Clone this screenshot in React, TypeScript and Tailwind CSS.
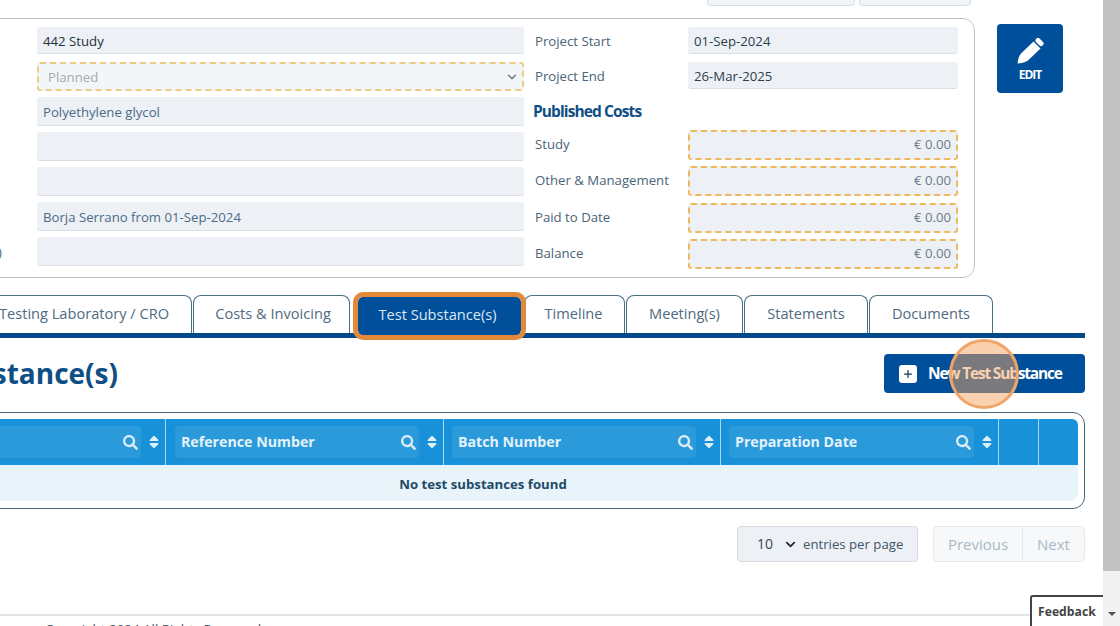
import React from 'react';
import { FaSearch, FaSort, FaChevronDown } from 'react-icons/fa';
import { Plus } from 'lucide-react';

const leftFields = [
  { value: 'Polyethylene glycol', label: '' },
  { value: '', label: '' },
  { value: '', label: '' },
  { value: 'Borja Serrano from 01-Sep-2024', label: '' },
  { value: '', label: ')' },
];

const costLabels = ['Study', 'Other & Management', 'Paid to Date', 'Balance'];

const tabs = [
  { name: 'Costs & Invoicing', w: 'w-[157px] pl-[3px]' },
  { name: 'Test Substance(s)', w: 'w-[163px] pr-[4px]', active: true },
  { name: 'Timeline', w: 'w-[101px] pr-[2px]' },
  { name: 'Meeting(s)', w: 'w-[117px]' },
  { name: 'Statements', w: 'w-[124px]' },
  { name: 'Documents', w: 'w-[124px]' },
];

const columns = [
  { name: 'Reference Number', w: 'w-[278px] pl-[9px]' },
  { name: 'Batch Number', w: 'w-[277px] pl-[8px]' },
  { name: 'Preparation Date', w: 'w-[278px] pl-[8px]' },
];

const PenIcon: React.FC = () => (
  <svg viewBox="0 0 28 28" className="w-[28px] h-[28px]" fill="currentColor">
    <path d="M1.5 26.5C2 22 3 19 5 16.5L17.5 4.5L24.5 11.5L12 23.5C9 25.5 5 26.5 1.5 26.5Z" />
    <path d="M22 3.5L25 6.5" stroke="currentColor" strokeWidth="5" strokeLinecap="round" />
  </svg>
);

const FilterCell: React.FC<{ name: string; w: string }> = ({ name, w }) => (
  <div className={`${w} h-full shrink-0 flex items-center gap-[5px] pr-[3px] border-r border-[#a9d8f2]`}>
    <div className="flex-1 h-[32px] bg-[#2b9ada] rounded-[4px] flex items-center justify-between pl-[6px] pr-[3px]">
      <span className="text-[14.2px] font-bold text-[#e4f2fb]">{name}</span>
      <FaSearch className="text-[15px] text-[#d8ecf8]" />
    </div>
    <FaSort className="text-[16px] text-[#dff0fa]" />
  </div>
);

export default function App() {
  return (
    <div className="w-[1120px] h-[626px] overflow-hidden flex bg-white text-[13.2px] text-[#4a6478] font-['Open_Sans',sans-serif]">
      <div className="relative w-[1103px] h-full flex flex-col shrink-0">
        {/* top buttons, cut off by the scroll position */}
        <div className="h-[6px] shrink-0 flex justify-end gap-[4px] pr-[132px]">
          <div className="w-[148px] h-full bg-[#f1f4f8] border border-t-0 border-[#d5dde3] rounded-b-[4px]" />
          <div className="w-[112px] h-full bg-[#f1f4f8] border border-t-0 border-[#d5dde3] rounded-b-[4px]" />
        </div>

        {/* study panel */}
        <div className="flex mt-[12px] shrink-0">
          <div className="-ml-[20px] w-[995px] h-[260px] shrink-0 border border-[#b9c5cc] rounded-[12px] pt-[8px] flex">
            <div className="w-[56px] shrink-0" />
            <div className="w-[487px] flex flex-col">
              <div className="h-[27px] bg-[#edf1f5] border-b border-[#d8dfe5] rounded-[3px] flex items-center px-[6px] pt-[3px] text-[#22303c]">442 Study</div>
              <div className="relative mt-[8px] h-[29px] bg-[#f3f6f8] border-2 border-dashed border-[#eecb85] rounded-[3px] flex items-center pl-[9px] pt-[2px] text-[#a3abb2]">
                Planned
                <FaChevronDown className="absolute right-[5px] top-[8px] text-[10px] text-[#7d8a94]" />
              </div>
              {leftFields.map((field, index) => (
                <div key={index} className="relative mt-[6px] h-[29px] bg-[#edf1f5] border-b border-[#d8dfe5] rounded-[3px] flex items-center px-[6px] pt-[3px] text-[#4b6a88]">
                  {field.value}
                  {field.label && <span className="absolute -left-[39px] text-[#4a6478]">{field.label}</span>}
                </div>
              ))}
            </div>
            <div className="ml-[11px] w-[153px] flex flex-col">
              <div className="h-[29px] flex items-center">Project Start</div>
              <div className="h-[29px] mt-[6px] flex items-center">Project End</div>
              <div className="mt-[6px] h-[29px] -ml-[2px] flex items-center text-[15.5px] font-bold tracking-[-0.9px] text-[#0f4f86]">Published Costs</div>
              <div className="mt-[4px] flex flex-col gap-[7.5px]">
                {costLabels.map((label) => (
                  <div key={label} className="h-[29px] flex items-center">{label}</div>
                ))}
              </div>
            </div>
            <div className="w-[270px] flex flex-col">
              <div className="h-[27px] bg-[#edf1f5] border-b border-[#d8dfe5] rounded-[3px] flex items-center px-[6px] pt-[3px] text-[#2c3e4c]">01-Sep-2024</div>
              <div className="h-[27px] mt-[8px] bg-[#edf1f5] border-b border-[#d8dfe5] rounded-[3px] flex items-center px-[6px] pt-[3px] text-[#2c3e4c]">26-Mar-2025</div>
              <div className="h-[41px] shrink-0" />
              <div className="flex flex-col gap-[6.4px]">
                {costLabels.map((label) => (
                  <div key={label} className="h-[30px] bg-[#edf1f5] border-2 border-dashed border-[#eeb95a] rounded-[3px] flex items-center justify-end pr-[5px] text-[#6c7b87]">€ 0.00</div>
                ))}
              </div>
            </div>
          </div>
          <div className="ml-[22px] mt-[6px] w-[66px] h-[69px] bg-[#004f9b] rounded-[4px] flex flex-col items-center pt-[13px] text-white">
            <PenIcon />
            <span className="mt-[1px] text-[12px] font-bold tracking-[-1px]">EDIT</span>
          </div>
        </div>

        {/* tabs */}
        <div className="mt-[17px] ml-[-25px] w-[1110px] h-[43px] shrink-0 flex border-b-[5px] border-[#004a8a]">
          <div className="w-[217px] h-[38px] mr-[1px] pb-[1px] bg-white border border-b-0 border-[#4a7184] rounded-t-[8px] flex items-center justify-end pr-[22px] text-[14.6px] text-[#4f6a80] whitespace-nowrap">Testing Laboratory / CRO</div>
          {tabs.map((tab) => (
            <div
              key={tab.name}
              className={
                tab.active
                  ? `${tab.w} h-[38px] mt-[2px] ml-[7px] mr-[3px] pb-[3px] bg-[#004f9b] flex items-center justify-center text-[14.6px] text-[#dbe8f4] rounded-[5px] outline-[5px] outline-[#e38a39] relative`
                  : `${tab.w} h-[38px] pb-[1px] bg-white border border-b-0 border-[#4a7184] rounded-t-[8px] flex items-center justify-center text-[14.6px] text-[#4f6a80] mr-[1px]`
              }
            >
              {tab.name}
            </div>
          ))}
        </div>

        {/* section header */}
        <div className="mt-[16px] w-[1085px] h-[39px] shrink-0 flex justify-between items-center">
          <div className="w-[118px] pb-[1px] flex justify-end">
            <h2 className="text-[28px] font-bold whitespace-nowrap text-[#0f4f86]">Test Substance(s)</h2>
          </div>
          <div className="w-[201px] h-[39px] bg-[#004f9b] rounded-[4px] flex items-center pl-[15px] text-white">
            <div className="w-[18px] h-[18px] bg-white rounded-[3px] flex items-center justify-center">
              <Plus className="w-[12px] h-[12px] text-[#1d3a55]" strokeWidth={2.5} />
            </div>
            <span className="ml-[11px] text-[15.5px] font-bold tracking-[-1.2px] whitespace-nowrap">New Test Substance</span>
          </div>
        </div>

        {/* table */}
        <div className="mt-[19px] -ml-[119px] w-[1204px] h-[97px] shrink-0 border border-[#48687a] rounded-[12px] p-[6px]">
          <div className="h-[46px] bg-[#1891d8] rounded-t-[6px] flex">
            <FilterCell name="Name" w="w-[278px] pl-[9px]" />
            {columns.map((col) => (
              <FilterCell key={col.name} name={col.name} w={col.w} />
            ))}
            <div className="w-[40px] h-full border-r border-[#a9d8f2]" />
          </div>
          <div className="h-[36px] bg-[#e8f3fa] rounded-b-[8px] flex items-center justify-center pt-[3px] text-[13.2px] font-bold text-[#1e4a68]">
            No test substances found
          </div>
        </div>

        {/* page size and paging */}
        <div className="mt-[17px] w-[1085px] shrink-0 flex justify-end gap-[15px]">
          <div className="w-[181px] h-[36px] bg-[#edf1f6] border border-[#d5dde3] rounded-[4px] flex items-center pl-[19px] text-[#3f5568]">
            <span className="pb-[1px] text-[14px] text-[#33475a]">10</span>
            <FaChevronDown className="ml-[12px] text-[11px] text-[#1f2d3a]" />
            <span className="ml-[7px] pt-[1px]">entries per page</span>
          </div>
          <div className="w-[152px] h-[36px] bg-[#f6f8fa] border border-[#e6eaee] rounded-[4px] flex items-center text-[15px] text-[#a9b8c4]">
            <div className="w-[89px] h-full flex items-center justify-center border-r border-[#e6eaee]">Previous</div>
            <div className="flex-1 text-center">Next</div>
          </div>
        </div>

        {/* footer */}
        <div className="mt-[52px] h-[20px] shrink-0 border-t-2 border-[#e5e5e5] pl-[45px] pt-[4px] text-[13.4px] leading-[18px] text-[#4a5560]">Copyright 2024 All Rights Reserved</div>

        {/* click marker on the button */}
        <div className="absolute left-[949px] top-[339px] w-[70px] h-[70px] rounded-full border-[3px] border-[#f0a468] bg-[#f4a460]/50" />
        {/* feedback widget */}
        <div className="absolute left-[1030px] top-[595px] w-[73px] h-[40px] bg-white border-2 border-b-0 border-r-0 border-[#444] rounded-tl-[3px] pl-[6px] pt-[6px] text-[12.2px] font-bold text-[#444]">Feedback</div>
      </div>

      {/* browser scrollbar */}
      <div className="w-[17px] h-full bg-[#f1f1f1] flex flex-col shrink-0">
        <div className="h-[571px] bg-[#c1c1c1]" />
        <div className="mt-[41px] mx-auto w-0 h-0 border-x-[4px] border-x-transparent border-t-[4px] border-t-[#505050]" />
      </div>
    </div>
  );
}
